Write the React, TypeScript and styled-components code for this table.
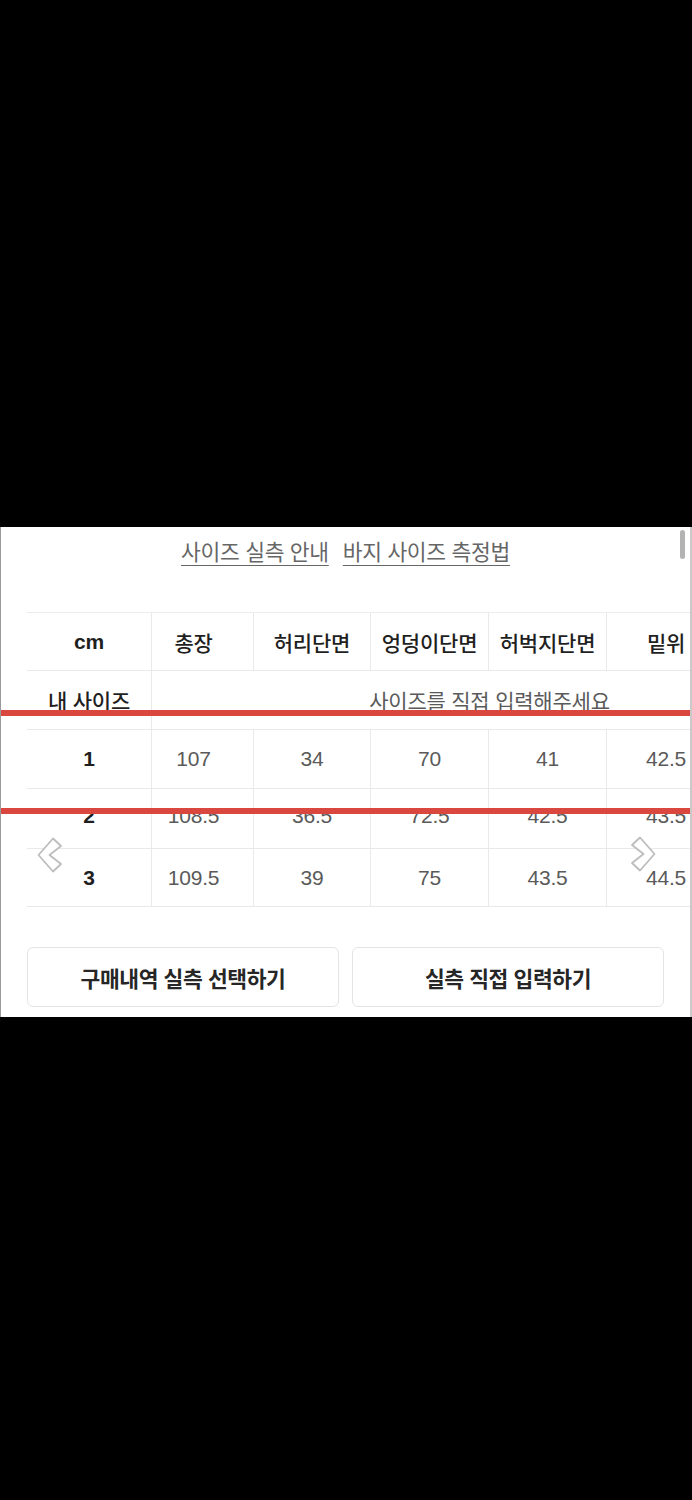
import React from "react";
import styled, { createGlobalStyle } from "styled-components";

const Global = createGlobalStyle`
  html, body { margin: 0; padding: 0; background: #000; }
  body {
    font-family: "Liberation Sans", "Noto Sans CJK KR", sans-serif;
    min-height: 1500px;
  }
  * { box-sizing: border-box; }
`;

const Page = styled.div`
  display: flex;
  flex-direction: column;
  padding-top: 527px;
  min-height: 1500px;
  background: #000;
`;

const Panel = styled.div`
  position: relative;
  height: 490px;
  background: #fff;
  border-left: 1px solid #9a9a9a;
  border-right: 2px solid #c9c9c9;
  overflow: hidden;
  display: flex;
  flex-direction: column;
`;

const LinkBar = styled.div`
  display: flex;
  justify-content: center;
  gap: 14px;
  padding: 11px 0 0 0;
  height: 85px;
`;

const GuideLink = styled.a`
  font-size: 21.5px;
  line-height: 30px;
  color: #666;
  text-decoration: underline;
  text-underline-offset: 5px;
  text-decoration-thickness: 1px;
  letter-spacing: -0.3px;
`;

const TableWrap = styled.div`
  margin-left: 26px;
  overflow: hidden;
`;

const Grid = styled.div`
  display: grid;
  grid-template-columns: 125px 102px 117px 118px 118px 118px;
  width: 698px;
  border-top: 1px solid #ececec;
`;

const Cell = styled.div<{ $h: number; $head?: boolean; $strong?: boolean; $shift?: number; $last?: boolean; $span?: number; $pad?: number; $size?: number; $lift?: number }>`
  height: ${(p) => p.$h}px;
  display: flex;
  align-items: center;
  justify-content: center;
  border-bottom: 1px solid #e9e9e9;
  border-right: ${(p) => (p.$last ? "none" : "1px solid #e9e9e9")};
  font-size: ${(p) => p.$size ?? (p.$head ? 21 : 21)}px;
  font-weight: ${(p) => (p.$strong ? 700 : p.$head ? 500 : 400)};
  color: ${(p) => (p.$strong || p.$head ? "#1f1f1f" : "#5a5a5a")};
  padding-right: ${(p) => p.$shift ?? 0}px;
  padding-left: ${(p) => p.$pad ?? 0}px;
  padding-bottom: ${(p) => p.$lift ?? 0}px;
  grid-column: ${(p) => (p.$span ? `span ${p.$span}` : "auto")};
  white-space: nowrap;
  letter-spacing: -0.2px;
`;

const ButtonRow = styled.div`
  display: flex;
  gap: 13px;
  margin: 40px 0 0 26px;
`;

const ActionButton = styled.button`
  width: 312px;
  height: 60px;
  background: #fff;
  border: 1px solid #e4e4e4;
  border-radius: 6px;
  font-family: "Liberation Sans", "Noto Sans CJK KR", sans-serif;
  font-size: 21.5px;
  font-weight: 700;
  color: #262626;
  letter-spacing: -0.4px;
  padding: 0;
`;

const RedLine = styled.div<{ $top: number }>`
  position: absolute;
  left: -1px;
  right: -2px;
  top: ${(p) => p.$top}px;
  height: 6px;
  background: #d9473e;
`;

const ScrollThumb = styled.div`
  position: absolute;
  top: 3px;
  right: 5px;
  width: 5px;
  height: 29px;
  border-radius: 3px;
  background: #b3b3b3;
`;

const Arrow = styled.svg<{ $left: number; $top: number }>`
  position: absolute;
  left: ${(p) => p.$left}px;
  top: ${(p) => p.$top}px;
  width: 28px;
  height: 38px;
`;

const Chevron = ({ dir, left, top }: { dir: "l" | "r"; left: number; top: number }) => {
  const pts: [number, number][] = [
    [1.5, 19],
    [16, 2.5],
    [24, 10],
    [12.5, 19],
    [24, 28],
    [16, 35.5],
  ];
  const d = pts.map(([x, y]) => `${dir === "l" ? x : 28 - x},${y}`).join(" ");
  return (
    <Arrow $left={left} $top={top} viewBox="0 0 28 38">
      <polygon points={d} fill="#fff" stroke="#bdbdbd" strokeWidth="1.8" strokeLinejoin="round" />
    </Arrow>
  );
};

const headers = ["총장", "허리단면", "엉덩이단면", "허벅지단면", "밑위"];
const rows: { n: string; v: string[]; h: number; lift?: number }[] = [
  { n: "1", v: ["107", "34", "70", "41", "42.5"], h: 59 },
  { n: "2", v: ["108.5", "36.5", "72.5", "42.5", "43.5"], h: 60, lift: 5 },
  { n: "3", v: ["109.5", "39", "75", "43.5", "44.5"], h: 58 },
];

export default function App() {
  return (
    <>
      <Global />
      <Page>
        <Panel>
          <LinkBar>
            <GuideLink>사이즈 실측 안내</GuideLink>
            <GuideLink>바지 사이즈 측정법</GuideLink>
          </LinkBar>
          <TableWrap>
            <Grid>
              <Cell $h={58} $strong $size={21}>cm</Cell>
              {headers.map((h, i) => (
                <Cell key={h} $h={58} $head $shift={i === 0 ? 18 : 0} $last={i === 4}>
                  {h}
                </Cell>
              ))}
              <Cell $h={59} $head>내 사이즈</Cell>
              <Cell $h={59} $span={5} $last $size={21} $pad={102}>
                사이즈를 직접 입력해주세요
              </Cell>
              {rows.map((r) => (
                <React.Fragment key={r.n}>
                  <Cell $h={r.h} $strong $lift={r.lift}>{r.n}</Cell>
                  {r.v.map((v, i) => (
                    <Cell key={i} $h={r.h} $shift={i === 0 ? 18 : 0} $last={i === 4} $lift={r.lift}>
                      {v}
                    </Cell>
                  ))}
                </React.Fragment>
              ))}
            </Grid>
          </TableWrap>
          <ButtonRow>
            <ActionButton>구매내역 실측 선택하기</ActionButton>
            <ActionButton>실측 직접 입력하기</ActionButton>
          </ButtonRow>
          <ScrollThumb />
          <Chevron dir="l" left={36} top={309} />
          <Chevron dir="r" left={627} top={308} />
          <RedLine $top={183} />
          <RedLine $top={281} />
        </Panel>
      </Page>
    </>
  );
}
